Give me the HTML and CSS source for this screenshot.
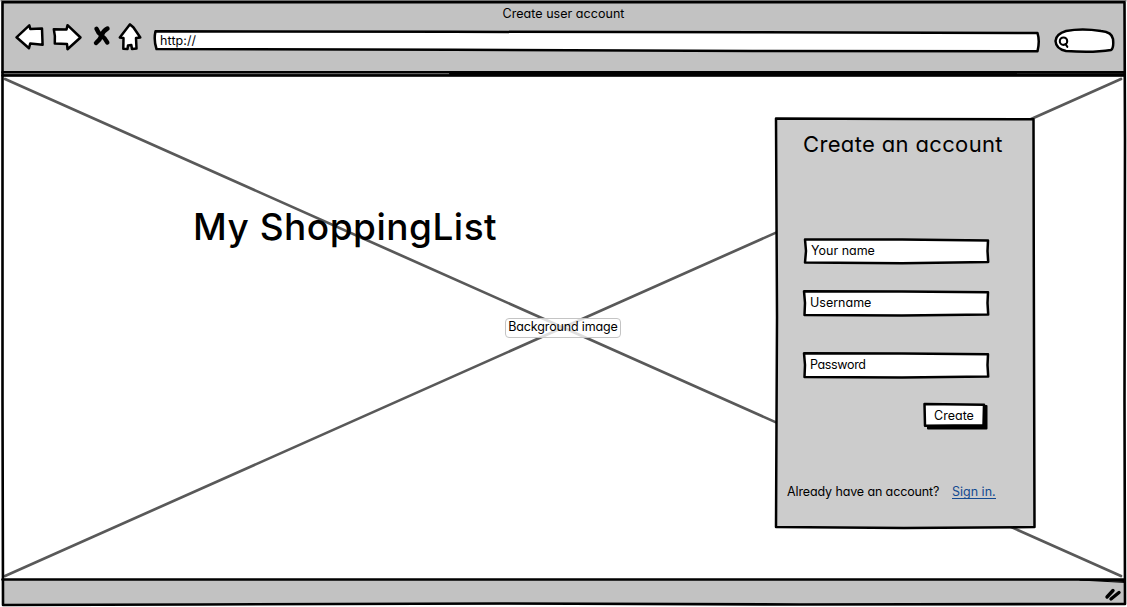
FILE: index.html
```html
<!DOCTYPE html>
<html lang="en">
<head>
<meta charset="utf-8">
<title>Create user account</title>
<link rel="stylesheet" href="styles.css">
</head>
<body>
<div class="browser">
  <header class="chrome">
    <h1 class="window-title">Create user account</h1>
    <div class="toolbar">
      <svg class="nav-icons" width="128" height="30" viewBox="14 22 128 30">
        <path d="M16.500 37.300L29.300 25.300L30.300 29L42 28.500L42.600 44.700L30.200 43.500L29 48.200Z"/>
        <path d="M53.800 29.300L66.500 29.500L67.500 25.200L80.500 37.500L67.500 49.200L67 44L54.800 43.500Q55.500 36 53.800 29.300Z"/>
        <path d="M130 24.300L119.800 37.500L123.500 38L123.300 48.800L127.500 49L128 45.500L131.300 45L132 49L136.500 48.500L136 38L140.300 37.500L133.500 27.500Z"/>
        <path class="cross" d="M96.500 28.800Q98 33 101.500 35.500T107.300 42.500M107.500 28.500Q103 31 101.500 35.500T96 43"/>
      </svg>
      <div class="address">
        <svg class="outline" viewBox="0 0 888 24"><path d="M2.500 2.300L300 2.800L600 3.200L884.500 4Q887 12 884.500 22.300L600 22L300 20.700L3.500 20Q.5 11 2.500 2.300Z"/></svg>
        <span class="address-text">http://</span>
      </div>
      <svg class="search" width="62" height="28" viewBox="1053 27 62 28">
        <path d="M1066 31Q1082 28 1101 31Q1112 32 1113 39Q1114 48 1111 50Q1093 53 1066 51Q1056 49 1055.500 41Q1056 34 1066 31Z"/>
        <circle class="lens" cx="1063.500" cy="41.200" r="3.700"/>
        <path class="lens" d="M1065.500 44L1067.300 46.800"/>
      </svg>
    </div>
  </header>

  <main class="page">
    <svg class="placeholder" viewBox="0 77 1127 501"><path d="M5 79L1121 576M5 576L1121 79"/></svg>
    <div class="brand">My ShoppingList</div>
    <div class="image-label">Background image</div>
    <form class="panel">
      <svg class="outline" viewBox="0 0 262 412"><path class="panel-box" d="M2 1.500L130 2L259.500 2.200L259.800 150L260.500 410L130 411L2 410L3 200Z"/></svg>
      <h2 class="panel-title">Create an account</h2>
      <label class="field first"><svg class="outline" viewBox="0 0 187 28"><path d="M3 2.500L100 2.500L186 3.500L185.500 14L186.200 25L100 26.300L3 25.500L4 14Z"/></svg><span>Your name</span></label>
      <label class="field second"><svg class="outline" viewBox="0 0 187 28"><path d="M2 2.200L100 2.500L186 3.200L185.500 14L186.200 25.500L100 26.500L2.500 26L3 14Z"/></svg><span>Username</span></label>
      <label class="field third"><svg class="outline" viewBox="0 0 187 28"><path d="M2 2.200L100 2.500L186 3.200L185.500 14L186.200 25.500L100 26.500L2.500 26L3 14Z"/></svg><span>Password</span></label>
      <button class="create" type="button">
        <svg class="outline" viewBox="0 0 65 28"><path class="shadow" d="M6 22L59 22L59 4L64.500 4L64.500 26.500L6 26.500Z"/><path d="M2.500 2L62 2.700L61.500 23.200L3 23.700Z"/></svg>
        <span>Create</span>
      </button>
      <p class="signin"><span class="question">Already have an account?</span><a class="link">Sign in.</a></p>
    </form>
  </main>

  <footer class="status">
    <svg class="grip" width="18" height="16" viewBox="1104 586 18 16"><path d="M1107 597L1113 590.500M1111 599L1119 592.500"/></svg>
  </footer>
  <svg class="window-frame" viewBox="0 0 1127 607">
    <path class="soft" d="M1 .8H1126M3 74.500H1000"/>
    <path d="M2.500 2.300H1124.500L1125 140L1124.500 400L1125 604L800 604.500L500 603.500L200 604.500L3 605L2.500 400Z"/>
    <path d="M2.500 72.300H1124M2.500 75.500H1124M2.500 579.500H1124"/>
    <path class="corner" d="M450 72.500L1124 73.300V75.500L450 74.500Z"/>
    <path class="corner" d="M1080 580L1124 580.500V582Z"/>
  </svg>
</div>
</body>
</html>
```
FILE: styles.css
```css
* { box-sizing: border-box; }
body {
  margin: 0;
  background: #fff;
  color: #000;
  font: 430 12.5px/16px Inter, "Open Sans", sans-serif;
  font-feature-settings: "cv11" 1;
}
h1, h2, p { margin: 0; font-weight: inherit; }
svg { display: block; fill: #fff; stroke: #000; stroke-width: 2.5; stroke-linejoin: round; stroke-linecap: round; }
.browser { position: relative; display: flex; flex-direction: column; width: 1127px; height: 607px; overflow: hidden; }
.window-frame { position: absolute; inset: 0; width: 1127px; height: 607px; fill: none; stroke-width: 2.6; pointer-events: none; }
.window-frame .soft { stroke: #444; stroke-width: 1.2; }
.window-frame .corner { fill: #000; stroke-width: 1; }
.chrome { flex: none; height: 76px; margin: 1px 2px 0; padding-top: 5px; background: #c2c2c2; }
.window-title { font-size: 12.5px; text-align: center; letter-spacing: .04px; }
.toolbar { display: flex; align-items: flex-start; padding-left: 12px; }
.nav-icons { flex: none; }
.cross { fill: none; stroke-width: 4.4; }
.address { position: relative; flex: none; width: 888px; height: 24px; margin: 7px 0 0 11px; padding: 4px 0 0 7px; }
.address-text { letter-spacing: .1px; }
.outline { position: absolute; inset: 0; width: 100%; height: 100%; overflow: visible; }
.address-text, .field span, .create span { position: relative; }
.search { flex: none; margin: 5px 0 0 12px; }
.lens { fill: none; stroke-width: 2.1; }
.page { position: relative; display: flex; height: 501px; flex: none; }
.placeholder { position: absolute; inset: 0; width: 1127px; height: 501px; stroke: #595959; stroke-width: 2.7; }
.brand { position: relative; width: 581px; margin: 127px 0 0 193px; font-size: 37px; font-weight: 450; line-height: 46px; letter-spacing: .5px; white-space: nowrap; }
.image-label { position: absolute; left: 505px; top: 241px; width: 116px; height: 20px; border: 1px solid #c4c4c4; border-radius: 4px; background: rgba(255,255,255,.8); text-align: center; line-height: 16px; letter-spacing: -.15px; white-space: nowrap; }
.panel { position: relative; display: flex; flex-direction: column; width: 262px; height: 412px; margin-top: 40px; padding: 11px 0 0 29px; }
.panel-box { fill: #ccc; }
.panel-title { position: relative; width: 204px; white-space: nowrap; font-size: 22px; line-height: 32px; font-weight: 400; letter-spacing: .35px; }
.field { position: relative; width: 187px; height: 28px; padding: 6px 0 0 9px; margin-left: -1px; }
.first { margin-top: 77px; }
.second { margin-top: 24px; padding-left: 8px; }
.third { margin-top: 34px; padding-left: 8px; letter-spacing: -.35px; }
.create { position: relative; width: 65px; height: 28px; margin: 23px 0 0 119px; padding: 0 1px 1px 0; border: 0; background: none; color: inherit; font: inherit; font-feature-settings: inherit; }
.shadow { fill: #000; stroke-width: 2; }
.signin { position: relative; display: flex; margin: 54px 0 0 -16px; white-space: nowrap; }
.question { width: 165px; letter-spacing: -.12px; }
.link { height: 15px; border-bottom: 1px solid #134a91; color: #134a91; line-height: 15px; }
.status { flex: 1; display: flex; justify-content: flex-end; margin: 1px 2px 2px; padding: 7px 3px 0 0; background: #c2c2c2; }
.grip { fill: none; stroke-width: 3.4; }
```
